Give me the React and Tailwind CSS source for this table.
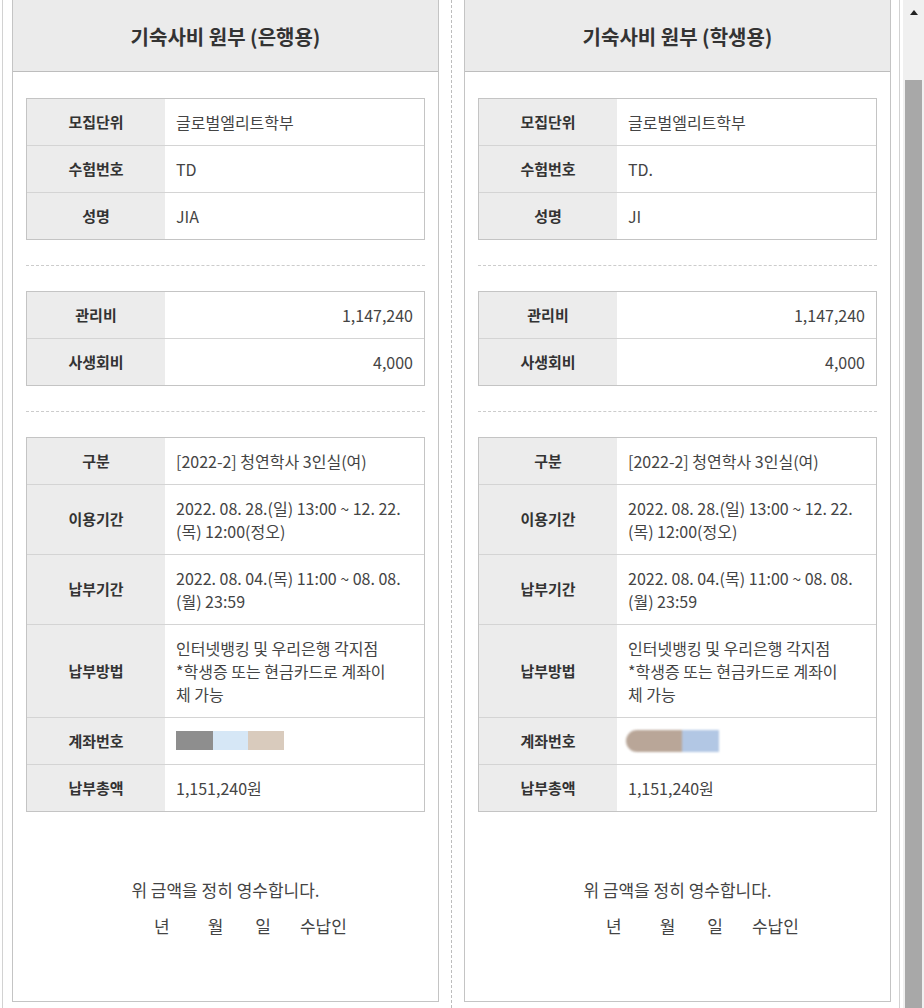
const FONT = "font-['Noto_Sans_CJK_KR','Noto_Sans',sans-serif]";

function Row({ label, children, right, first }) {
  return (
    <div className={`flex ${first ? '' : 'border-t border-[#d4d4d4]'}`}>
      <div className="w-[138px] shrink-0 bg-[#ececec] flex items-center justify-center text-[15px] font-bold text-[#333]">
        {label}
      </div>
      <div
        className={`flex-1 bg-white py-[11.5px] pl-[11px] pr-[11px] text-[16px] leading-[23px] text-[#444] ${right ? 'text-right' : ''}`}
      >
        {children}
      </div>
    </div>
  );
}

function Table({ children }) {
  return <div className="border border-[#c4c4c4]">{children}</div>;
}

function Dashed() {
  return <div className="my-[25px] border-t border-dashed border-[#cccccc]" />;
}

function Account({ variant }) {
  if (variant === 'bank') {
    return (
      <div className="flex h-[23px] items-center">
        <div className="flex blur-[0.6px] mt-[-2px]">
          <div className="w-[37px] h-[19px] bg-[#8e8e8e]" />
          <div className="w-[35px] h-[19px] bg-[#d6e7f6]" />
          <div className="w-[36px] h-[19px] bg-[#d9cbbd]" />
        </div>
      </div>
    );
  }
  return (
    <div className="flex h-[23px] items-center -ml-[2px]">
      <div className="flex blur-[0.8px]">
        <div className="w-[56px] h-[22px] bg-[#b9a698] rounded-l-full" />
        <div className="w-[37px] h-[22px] bg-[#b2c7e4]" />
      </div>
    </div>
  );
}

function Panel({ title, idNo, name, variant }) {
  return (
    <div className="w-[427px] h-[1002px] border border-t-0 border-[#c4c4c4] bg-white flex flex-col">
      <div className="h-[72px] bg-[#ebebeb] border-b border-[#bdbdbd] flex items-center justify-center pt-[3px]">
        <h2 className="text-[20px] font-bold text-[#333]">{title}</h2>
      </div>

      <div className="px-[13px] pt-[26px]">
        <Table>
          <Row label="모집단위" first>글로벌엘리트학부</Row>
          <Row label="수험번호">{idNo}</Row>
          <Row label="성명">{name}</Row>
        </Table>

        <Dashed />

        <Table>
          <Row label="관리비" right first>1,147,240</Row>
          <Row label="사생회비" right>4,000</Row>
        </Table>

        <Dashed />

        <Table>
          <Row label="구분" first>[2022-2] 청연학사 3인실(여)</Row>
          <Row label="이용기간">
            <span className="whitespace-nowrap">2022. 08. 28.(일) 13:00 ~ 12. 22.</span>
            <br />
            (목) 12:00(정오)
          </Row>
          <Row label="납부기간">
            <span className="whitespace-nowrap">2022. 08. 04.(목) 11:00 ~ 08. 08.</span>
            <br />
            (월) 23:59
          </Row>
          <Row label="납부방법">
            <span className="whitespace-nowrap">인터넷뱅킹 및 우리은행 각지점</span>
            <br />
            <span className="whitespace-nowrap">*학생증 또는 현금카드로 계좌이</span>
            <br />
            체 가능
          </Row>
          <Row label="계좌번호">
            <Account variant={variant} />
          </Row>
          <Row label="납부총액">1,151,240원</Row>
        </Table>
      </div>

      <div className="mt-[66px] text-center text-[17px] leading-[24px] text-[#444]">
        위 금액을 정히 영수합니다.
      </div>
      <div className="mt-[12px] flex pl-[141px] text-[17px] leading-[24px] text-[#444]">
        <span>년</span>
        <span className="ml-[38px]">월</span>
        <span className="ml-[32px]">일</span>
        <span className="ml-[29px]">수납인</span>
      </div>
    </div>
  );
}

export default function App() {
  return (
    <div className={`w-[924px] h-[1008px] overflow-hidden bg-white flex ${FONT}`}>
      <div className="ml-[2px] w-[898px] h-full border-x border-[#d2d2d2] flex pl-[9px]">
        <Panel title="기숙사비 원부 (은행용)" idNo="TD" name="JIA" variant="bank" />
        <div className="w-[25px] flex justify-center">
          <div className="h-full border-l border-dashed border-[#bdbdbd]" />
        </div>
        <Panel title="기숙사비 원부 (학생용)" idNo="TD." name="JI" variant="student" />
      </div>

      {/* scrollbar */}
      <div className="ml-[3px] w-[21px] h-full bg-[#f0f0f0] flex flex-col items-center">
        <div className="h-[24px] flex items-center justify-center">
          <div className="w-0 h-0 border-l-[4px] border-r-[4px] border-b-[5px] border-l-transparent border-r-transparent border-b-[#222]" />
        </div>
        <div className="mt-[56px] w-[17px] flex-1 bg-[#a8a8a8]" />
      </div>
    </div>
  );
}
